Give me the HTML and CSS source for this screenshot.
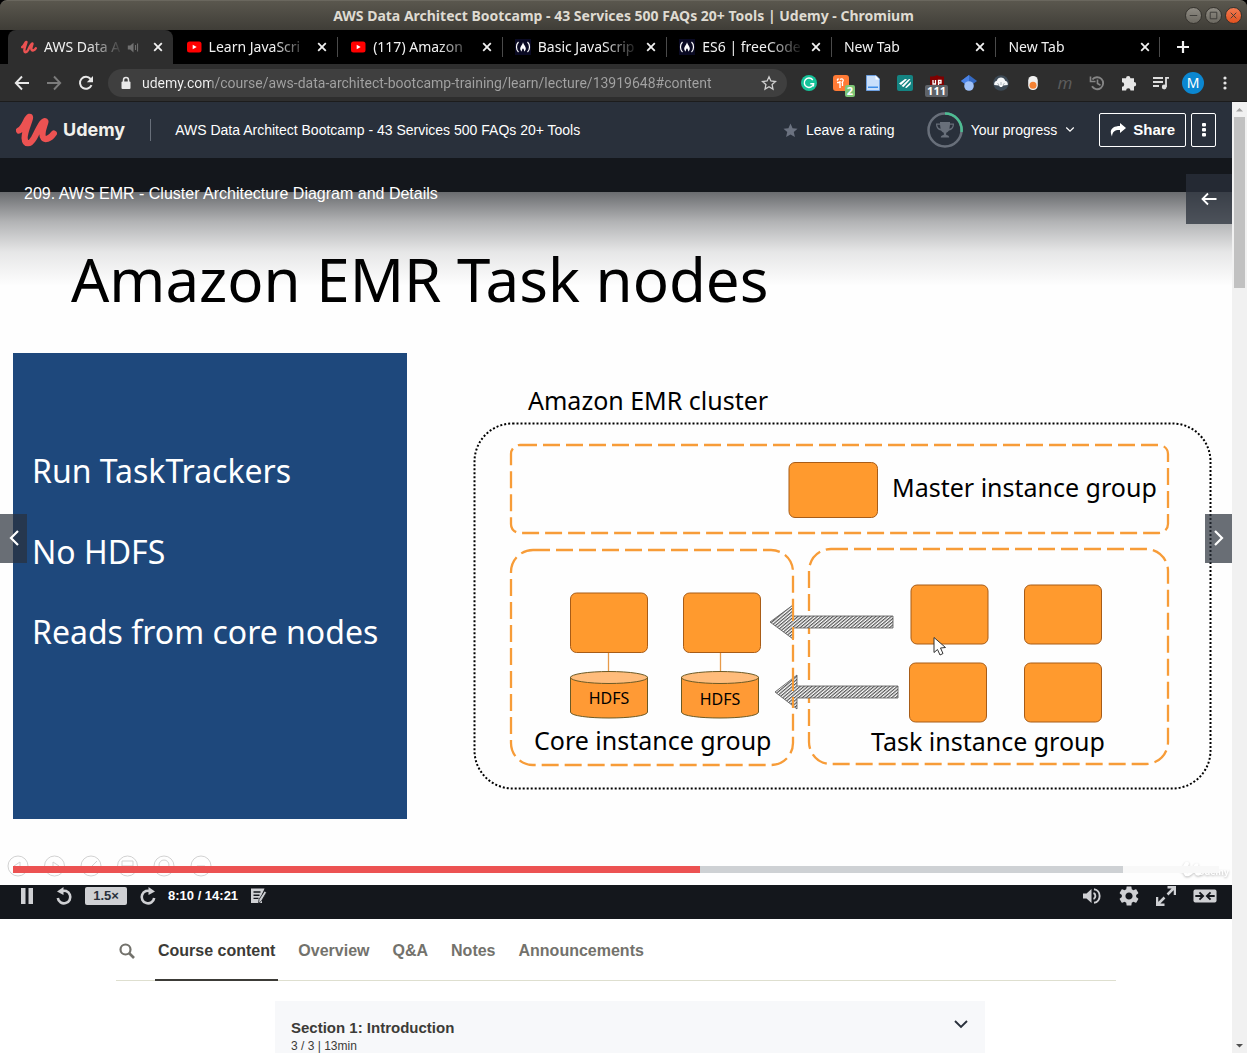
FILE: index.html
```html
<!DOCTYPE html>
<html lang="en">
<head>
<meta charset="utf-8">
<meta name="viewport" content="width=device-width, initial-scale=1">
<title>AWS Data Architect Bootcamp - 43 Services 500 FAQs 20+ Tools | Udemy</title>
<link rel="stylesheet" href="styles.css">
</head>
<body>
<svg class="sprite" aria-hidden="true">
  <symbol id="i-close" viewBox="0 0 16 16"><path d="M4.200 4.200l7.600 7.600M11.800 4.200l-7.600 7.600" stroke="currentColor" stroke-width="1.800" fill="none"/></symbol>
  <symbol id="i-u" viewBox="0 0 41 34"><path d="M3 17.500C9 14.500 10 5 13.500 3.800C16 3.500 8.500 17 8.600 25C9 32 14 32 18 25C22 17.500 25.500 8.500 29 8C31 8 25 17.500 26.800 23.500C28.500 28 34 26 37.800 20.500" fill="none" stroke="currentColor" stroke-width="6.200" stroke-linecap="round" stroke-linejoin="round"/></symbol>
  <symbol id="i-yt" viewBox="0 0 16 16"><rect x="1" y="2.500" width="14.500" height="11" rx="2.500" fill="#f00"/><path d="M6.700 5.700v4.600l4-2.300z" fill="#fff"/></symbol>
  <symbol id="i-fcc" viewBox="0 0 16 16"><rect width="16" height="16" fill="#0a0a23"/><path d="M3.500 3C.8 5.500.8 10.500 3.500 13M12.500 3c2.700 2.500 2.700 7.500 0 10" fill="none" stroke="#fff" stroke-width="1.200"/><path d="M8 3.200c.6 2.600 2.800 3.800 2.800 6.300 0 1.300-.6 2.300-1.700 3 .3-1.600-.4-2.400-1.100-3.300-.8.9-1.400 1.800-1.100 3.300-1.100-.7-1.700-1.700-1.700-3C5.200 7 7.600 6 8 3.200z" fill="#fff"/></symbol>
  <symbol id="i-down" viewBox="0 0 16 16"><path d="M2 4l6 6 6-6" fill="none" stroke="currentColor" stroke-width="1.900"/></symbol>
</svg>

<header class="titlebar">
  <h1 class="titlebar-text">AWS Data Architect Bootcamp - 43 Services 500 FAQs 20+ Tools | Udemy - Chromium</h1>
  <div class="window-buttons">
    <button class="window-button" aria-label="Minimize"><svg viewBox="0 0 16 16"><path d="M4 8h8"/></svg></button>
    <button class="window-button" aria-label="Maximize"><svg viewBox="0 0 16 16"><path d="M4.500 4.500h7v7h-7z"/></svg></button>
    <button class="window-button window-close" aria-label="Close window"><svg viewBox="0 0 16 16"><path d="M5 5l6 6M11 5l-6 6"/></svg></button>
  </div>
</header>

<nav class="tabstrip" aria-label="Browser tabs">
  <div class="tab tab-active">
    <svg class="favicon favicon-udemy"><use href="#i-u"/></svg><span class="tab-title">AWS Data A</span>
    <svg class="tab-sound" viewBox="0 0 16 16"><path d="M1 5.500h3l4-3.500v12L4 10.500H1z" fill="currentColor"/><path d="M10.500 5v6M13 3v10" stroke="currentColor" stroke-width="1.300"/></svg>
    <button class="tab-close" aria-label="Close tab"><svg><use href="#i-close"/></svg></button>
  </div>
  <div class="tab"><svg class="favicon"><use href="#i-yt"/></svg><span class="tab-title">Learn JavaScri</span><button class="tab-close" aria-label="Close tab"><svg><use href="#i-close"/></svg></button></div>
  <div class="tab"><svg class="favicon"><use href="#i-yt"/></svg><span class="tab-title">(117) Amazon</span><button class="tab-close" aria-label="Close tab"><svg><use href="#i-close"/></svg></button></div>
  <div class="tab"><svg class="favicon"><use href="#i-fcc"/></svg><span class="tab-title">Basic JavaScrip</span><button class="tab-close" aria-label="Close tab"><svg><use href="#i-close"/></svg></button></div>
  <div class="tab"><svg class="favicon"><use href="#i-fcc"/></svg><span class="tab-title">ES6 | freeCode</span><button class="tab-close" aria-label="Close tab"><svg><use href="#i-close"/></svg></button></div>
  <div class="tab"><span class="tab-title">New Tab</span><button class="tab-close" aria-label="Close tab"><svg><use href="#i-close"/></svg></button></div>
  <div class="tab"><span class="tab-title">New Tab</span><button class="tab-close" aria-label="Close tab"><svg><use href="#i-close"/></svg></button></div>
  <button class="new-tab" aria-label="New tab"><svg viewBox="0 0 16 16"><path d="M8 2v12M2 8h12" stroke="currentColor" stroke-width="2.200"/></svg></button>
</nav>

<div class="toolbar">
  <button class="tool" aria-label="Back"><svg viewBox="0 0 16 16"><path d="M15 8H2M8 1.500L1.800 8 8 14.500" fill="none" stroke="#e8e8e8" stroke-width="1.900"/></svg></button>
  <button class="tool" aria-label="Forward"><svg viewBox="0 0 16 16"><path d="M1 8h13M8 1.500L14.200 8 8 14.500" fill="none" stroke="#7c7c7c" stroke-width="1.900"/></svg></button>
  <button class="tool" aria-label="Reload"><svg viewBox="0 0 16 16"><path d="M13.500 10.200A6 6 0 1 1 12.600 4" fill="none" stroke="#e8e8e8" stroke-width="2"/><path d="M15 1v6.200H8.800z" fill="#e8e8e8"/></svg></button>
  <div class="omnibox">
    <svg class="lock" viewBox="0 0 12 14"><rect x="1.500" y="5.500" width="9" height="7.500" rx="1" fill="#e8e8e8"/><path d="M3.500 6V4a2.500 2.500 0 0 1 5 0v2" fill="none" stroke="#e8e8e8" stroke-width="1.500"/></svg>
    <input class="address" type="text" aria-label="Address" value="udemy.com/course/aws-data-architect-bootcamp-training/learn/lecture/13919648#content">
    <button class="bookmark" aria-label="Bookmark this page"><svg viewBox="0 0 16 16"><path d="M8 1.800l1.900 4.200 4.600.5-3.400 3.100.9 4.500L8 11.800l-4 2.300.9-4.500L1.500 6.500l4.600-.5z" fill="none" stroke="#d0d0d0" stroke-width="1.300"/></svg></button>
  </div>
  <div class="extensions">
    <button class="tool" aria-label="Grammar"><svg viewBox="0 0 16 16"><circle cx="8" cy="8" r="8" fill="#15c39a"/><path d="M11.800 5A4.700 4.700 0 1 0 12.600 8.700H9.300M12.600 8.500l-.2 3" fill="none" stroke="#fff" stroke-width="1.400"/></svg></button>
    <button class="tool" aria-label="Coupons, 2 found"><svg viewBox="0 0 16 16"><rect width="16" height="16" rx="3" fill="#ff7a35"/><path d="M7 13V6M7 4.500C9.500 2.500 12 5.500 8.500 7.500M9.500 7v4M7 7.500H4M5.500 3.500L4 5.500" fill="none" stroke="#fff" stroke-width="1.300"/></svg><span class="count count-green">2</span></button>
    <button class="tool" aria-label="Page notes"><svg viewBox="0 0 16 16"><path d="M1.500.5h9.500l3.500 3.500v11.500h-13z" fill="#c9dffb" stroke="#6d9fdf"/><path d="M10.500.5v4h4z" fill="#fff"/><path d="M3 11.500h10v1.500H3z" fill="#3f8ee8"/></svg></button>
    <button class="tool" aria-label="Reader"><svg viewBox="0 0 16 16"><rect width="16" height="16" rx="2" fill="#148482"/><path d="M2 8.500l6-4.500 2 .2-6 5.800zM4.500 11L12 4l1.500.2L6.500 12zM8 12.500l6-6-.5 3-4 3.500z" fill="#fff"/></svg></button>
    <button class="tool" aria-label="Blocker, 111 blocked"><svg viewBox="0 0 16 16"><path d="M1 1.500Q6 1.500 8 0q2 1.500 7 1.500V9q0 5-7 7-7-2-7-7z" fill="#800000"/><path d="M4 5v4h2.500V5M9.500 10V5.500H12V8H9.500" fill="none" stroke="#fff" stroke-width="1.300"/></svg><span class="count count-gray">111</span></button>
    <button class="tool" aria-label="Scholar"><svg viewBox="0 0 16 16"><path d="M8 0l8 6-8 6-8-6z" fill="#356ac3"/><path d="M8 0L0 6l8 6z" fill="#4b83e6"/><circle cx="8" cy="11" r="4.800" fill="#9fc1f8"/></svg></button>
    <button class="tool" aria-label="Proxy"><svg viewBox="0 0 16 16"><circle cx="8" cy="8" r="7.800" fill="#3d4a56"/><path d="M1.200 10c-.3-2.200 1-4 2.600-4.200C4.500 3.600 6 2.500 8 2.500s3.500 1.100 4.200 3.300c1.600.2 2.900 2 2.600 4.200L10 10.500 9 12H7L6 10.500z" fill="#f4f6f8"/><path d="M8 10V7M6 10L4.500 8M10 10l1.500-2" stroke="#9aa4ab" stroke-width=".8"/></svg></button>
    <button class="tool" aria-label="Switch"><svg viewBox="0 0 16 16"><rect x="3.200" y="1" width="9.600" height="14" rx="4.500" fill="#f0f0f0"/><circle cx="8" cy="10.200" r="3.500" fill="#f58233"/></svg></button>
    <button class="tool tool-m" aria-label="Mercury"><i>m</i></button>
    <button class="tool" aria-label="History"><svg viewBox="0 0 16 16"><path d="M3.400 4.500A6 6 0 1 1 3 11.300" fill="none" stroke="#858585" stroke-width="1.900"/><path d="M1.500 1.500v5h5M8.500 4.500v4l3 1.700" fill="none" stroke="#858585" stroke-width="1.600"/></svg></button>
    <button class="tool" aria-label="Extensions"><svg viewBox="0 0 16 16"><path d="M1 3.300H5a2.200 2.200 0 1 1 4.400 0H13V7a2.200 2.200 0 1 1 0 4.400v4.100H9.500a2.200 2.200 0 0 0-4.400 0H1v-3.800a2.200 2.200 0 0 0 0-4.400z" fill="#e6e6e6"/></svg></button>
    <button class="tool" aria-label="Media"><svg viewBox="0 0 16 16"><path d="M0 3h10M0 7h10M0 11h6M13 12V2.800h3" fill="none" stroke="#dedede" stroke-width="1.800"/><circle cx="11.200" cy="12" r="2.400" fill="#dedede"/></svg></button>
    <button class="tool" aria-label="Profile"><span class="avatar">M</span></button>
    <button class="tool" aria-label="Browser menu"><svg viewBox="0 0 16 16" fill="#e6e6e6"><circle cx="8" cy="3" r="1.600"/><circle cx="8" cy="8" r="1.600"/><circle cx="8" cy="13" r="1.600"/></svg></button>
  </div>
</div>

<div class="viewport">
  <main class="page">
    <header class="course-header">
      <a class="brand" href="#home"><svg class="brand-mark"><use href="#i-u"/></svg><span class="brand-name">Udemy</span></a>
      <a class="course-title" href="#course">AWS Data Architect Bootcamp - 43 Services 500 FAQs 20+ Tools</a>
      <button class="rating"><svg viewBox="0 0 16 16"><path d="M8 .5l2.200 5 5.300.5-4 3.600 1.200 5.400L8 12.300 3.300 15l1.200-5.400-4-3.600 5.300-.5z" fill="#6b7280"/></svg>Leave a rating</button>
      <button class="progress">
        <svg class="ring" viewBox="0 0 36 36"><circle cx="18" cy="18" r="16.500" fill="none" stroke="#686f7a" stroke-width="2.500"/><path d="M18 1.500A16.500 16.500 0 0 1 34.500 20" fill="none" stroke="#4dbd93" stroke-width="2.500"/><path d="M13 10h10v1.500h4c0 4-1.500 6.500-5 7-.8 1.300-2 2-2.800 2.300v2.200c1.800.2 3 1 3 2.500h-8.400c0-1.500 1.200-2.300 3-2.500v-2.200c-.8-.3-2-1-2.800-2.300-3.500-.5-5-3-5-7h4z" fill="#686f7a"/><path d="M10.200 12.800h2.800l.6 4c-2-.4-3.100-1.800-3.400-4zM25.800 12.800H23l-.6 4c2-.4 3.100-1.800 3.400-4z" fill="#29303b"/></svg>
        <span>Your progress</span><svg class="chevron"><use href="#i-down"/></svg>
      </button>
      <div class="header-buttons">
        <button class="outline share"><svg viewBox="0 0 16 14"><path d="M10 0l6 5-6 5V7C5 6.800 2.500 8.500 2 13.500-1.500 6.500 3 3 10 3z" fill="currentColor"/></svg>Share</button>
        <button class="outline more" aria-label="More options"><svg viewBox="0 0 4 14" fill="currentColor"><rect width="4" height="3.500" rx="1"/><rect y="5" width="4" height="3.500" rx="1"/><rect y="10" width="4" height="3.500" rx="1"/></svg></button>
      </div>
    </header>

    <section class="player" aria-label="Video player">
      <svg class="slide" viewBox="0 0 1232 693" role="img" aria-label="Amazon EMR Task nodes">
        <defs>
          <pattern id="hatch" width="2.500" height="2.500" patternUnits="userSpaceOnUse" patternTransform="rotate(50)"><rect width="2.500" height="2.500" fill="#fff"/><rect width="1.200" height="2.500" fill="#555"/></pattern>
        </defs>
        <rect width="1232" height="693" fill="#fefefe"/>
        <text class="slide-title" x="71" y="110">Amazon EMR Task nodes</text>
        <rect x="13" y="161" width="394" height="466" fill="#1e487c"/>
        <g class="slide-points"><text x="32" y="291">Run TaskTrackers</text><text x="32" y="372">No HDFS</text><text x="32" y="452">Reads from core nodes</text></g>
        <rect x="474.500" y="231.500" width="736" height="365" rx="38" fill="none" stroke="#000" stroke-width="2" stroke-dasharray="2 2"/>
        <g fill="none" stroke="#f79c38" stroke-width="2.300" stroke-dasharray="17 6">
          <rect x="511" y="253" width="657" height="88" rx="9"/>
          <rect x="511" y="358" width="282" height="215" rx="22"/>
          <rect x="809" y="357" width="359" height="215" rx="22"/>
        </g>
        <g fill="url(#hatch)" stroke="#555" stroke-width=".8">
          <path d="M770 430l23-17v11h100v12H793v11z"/>
          <path d="M775 500l22-17v11h101v12H797v11z"/>
        </g>
        <path d="M793 412v36M793 482v34" stroke="#f79c38" stroke-width="2" stroke-dasharray="17 6"/>
        <path d="M608.500 460v20M720.500 460v20" stroke="#e79a49" stroke-width="1.300"/>
        <g fill="#ff9a2e" stroke="#a85c17">
          <rect x="789" y="270.500" width="88.500" height="55" rx="6"/>
          <rect x="570.500" y="401" width="77" height="59.500" rx="6"/>
          <rect x="683.500" y="401" width="77" height="59.500" rx="6"/>
          <rect x="911" y="393" width="77" height="59" rx="6"/>
          <rect x="1024.500" y="393" width="77" height="59" rx="6"/>
          <rect x="909.500" y="471" width="77" height="59" rx="6"/>
          <rect x="1024.500" y="471" width="77" height="59" rx="6"/>
        </g>
        <g fill="#ff9a35" stroke="#6b5a26">
          <path d="M570.500 485v35c0 8 77 8 77 0v-35z"/><path d="M681.500 485v35c0 8 77 8 77 0v-35z"/>
          <ellipse cx="609" cy="485.500" rx="38.500" ry="6" fill="#ffbc7b"/><ellipse cx="720" cy="485.500" rx="38.500" ry="6" fill="#ffbc7b"/>
        </g>
        <g class="slide-labels"><text x="528" y="218">Amazon EMR cluster</text><text x="892" y="305">Master instance group</text><text x="534" y="558">Core instance group</text><text x="871" y="559">Task instance group</text></g>
        <g class="slide-hdfs"><text x="609" y="512">HDFS</text><text x="720" y="513">HDFS</text></g>
        <path d="M934 445.500v15l3.500-3 2.500 5.500 3-1.500-2.500-5.500 5-.5z" fill="#fff" stroke="#333" stroke-width="1"/>
        <g fill="none" stroke="#d2d2d2">
          <circle cx="18" cy="674" r="10"/><circle cx="54.500" cy="674" r="10"/><circle cx="91" cy="674" r="10"/><circle cx="127.500" cy="674" r="10"/><circle cx="164" cy="674" r="10"/><circle cx="201" cy="674" r="10"/>
          <path d="M20 670l-6 4 6 4zM53 670l6 4-6 4zM88 678l9-9M122 669h11v5h-11zM123 677h9M197 674h8"/><circle cx="164" cy="673" r="5"/>
        </g>
        <g class="watermark"><path d="M1181 679c4-3 4-8 6-8s-3 7-2 10 6 2 8-3 4-6 4-5-2 8 0 9 3-1 4-3" fill="none" stroke="#fff" stroke-width="3"/><text x="1198" y="683">Udemy</text></g>
      </svg>
      <h2 class="lecture-title">209. AWS EMR - Cluster Architecture Diagram and Details</h2>
      <button class="expand" aria-label="Open course content"><svg viewBox="0 0 16 14"><path d="M15.500 7H2M7 1.500L1.500 7 7 12.500" fill="none" stroke="#fff" stroke-width="1.800"/></svg></button>
      <button class="step step-prev" aria-label="Previous lecture"><svg viewBox="0 0 10 16"><path d="M9 1L2 8l7 7" fill="none" stroke="#fff" stroke-width="2.200"/></svg></button>
      <button class="step step-next" aria-label="Next lecture"><svg viewBox="0 0 10 16"><path d="M1 1l7 7-7 7" fill="none" stroke="#fff" stroke-width="2.200"/></svg></button>
      <div class="player-bar">
        <input class="seek" type="range" min="0" max="861" value="490" aria-label="Seek" style="--played:57%;--loaded:92%">
        <div class="controls">
          <button class="control" aria-label="Pause"><svg viewBox="0 0 20 20"><path d="M4 2h4.500v16H4zM11.500 2H16v16h-4.500z" fill="currentColor"/></svg></button>
          <button class="control" aria-label="Rewind"><svg viewBox="0 0 20 20"><path d="M7 5.500A6.300 6.300 0 1 1 3.800 12" fill="none" stroke="currentColor" stroke-width="2.600"/><path d="M9.500 1v8L3 5.500z" fill="currentColor"/></svg></button>
          <button class="speed">1.5×</button>
          <button class="control" aria-label="Forward"><svg viewBox="0 0 20 20"><path d="M13 5.500A6.300 6.300 0 1 0 16.200 12" fill="none" stroke="currentColor" stroke-width="2.600"/><path d="M10.500 1v8L17 5.500z" fill="currentColor"/></svg></button>
          <span class="time">8:10 / 14:21</span>
          <button class="control" aria-label="Add note"><svg viewBox="0 0 20 20"><path d="M3 2.500h13.500l-1 2.500-1.500 3v9H3z" fill="currentColor"/><path d="M5.500 6h7M5.500 9.200h6M5.500 12.400h5" stroke="#14171c" stroke-width="1.400"/><path d="M16.500 5l2 1.500-5 8.500-3 2.500.5-4z" fill="currentColor" stroke="#14171c" stroke-width=".8"/></svg></button>
          <div class="controls-right">
            <button class="control" aria-label="Volume"><svg viewBox="0 0 20 20"><path d="M1 7.500h3.500l5-4.500v14l-5-4.500H1z" fill="currentColor"/><path d="M11.500 7c2.500 1 2.500 5 0 6M12 3.200c7.500 1 7.500 12.600 0 13.600" fill="none" stroke="currentColor" stroke-width="1.900"/></svg></button>
            <button class="control" aria-label="Settings"><svg viewBox="2 2 20 20"><path fill="currentColor" d="M19.140 12.940c.04-.3.06-.61.06-.94 0-.32-.02-.64-.07-.94l2.030-1.580c.18-.14.23-.41.12-.61l-1.920-3.320c-.12-.22-.37-.29-.59-.22l-2.390.96c-.5-.38-1.030-.7-1.620-.94l-.36-2.540c-.04-.24-.24-.41-.48-.41h-3.840c-.24 0-.43.17-.47.41l-.36 2.540c-.59.24-1.130.57-1.620.94l-2.390-.96c-.22-.08-.47 0-.59.22L2.740 8.870c-.12.21-.08.47.12.61l2.030 1.580c-.05.3-.09.63-.09.94s.02.64.07.94l-2.030 1.580c-.18.14-.23.41-.12.61l1.920 3.320c.12.22.37.29.59.22l2.390-.96c.5.38 1.030.7 1.620.94l.36 2.540c.05.24.24.41.48.41h3.840c.24 0 .44-.17.47-.41l.36-2.540c.59-.24 1.130-.56 1.620-.94l2.390.96c.22.08.47 0 .59-.22l1.920-3.320c.12-.22.07-.47-.12-.61l-2.010-1.580zM12 15.600c-1.980 0-3.600-1.620-3.600-3.600s1.620-3.600 3.600-3.600 3.600 1.620 3.600 3.600-1.620 3.600-3.600 3.600z"/></svg></button>
            <button class="control" aria-label="Full screen"><svg viewBox="0 0 20 20"><path d="M11.500 8.500L18 2M11.500 1.200H19V9M8.500 11.500L2 18M8.500 18.800H1V11" fill="none" stroke="currentColor" stroke-width="2.500"/></svg></button>
            <button class="control control-wide" aria-label="Theatre mode"><svg viewBox="0 0 26 20"><rect x=".5" y="3" width="25" height="14" rx="2" fill="currentColor"/><path d="M2.500 10H10M7 6l4 4-4 4M23.500 10H16M19 6l-4 4 4 4" fill="none" stroke="#14171c" stroke-width="2"/></svg></button>
          </div>
        </div>
      </div>
    </section>

    <nav class="course-nav" aria-label="Course sections">
      <button class="search" aria-label="Search course content"><svg viewBox="0 0 16 16"><circle cx="6.500" cy="6.500" r="5" fill="none" stroke="currentColor" stroke-width="2.200"/><path d="M10 10l5 5" stroke="currentColor" stroke-width="2.600"/></svg></button>
      <a class="nav-link nav-current" href="#content">Course content</a>
      <a class="nav-link" href="#overview">Overview</a>
      <a class="nav-link" href="#qa">Q&amp;A</a>
      <a class="nav-link" href="#notes">Notes</a>
      <a class="nav-link" href="#announcements">Announcements</a>
    </nav>

    <div class="curriculum">
      <section class="section-card">
        <div class="section-text"><h3>Section 1: Introduction</h3><p>3 / 3 | 13min</p></div>
        <button class="section-toggle" aria-label="Expand section"><svg><use href="#i-down"/></svg></button>
      </section>
    </div>
  </main>
  <div class="scrollbar" aria-hidden="true">
    <svg class="scroll-arrow" viewBox="0 0 15 15"><path d="M4 9.500L7.500 6 11 9.500z" fill="#a3a3a3"/></svg>
    <div class="scroll-thumb"></div>
    <svg class="scroll-arrow" viewBox="0 0 15 15"><path d="M4 6l3.500 3.500L11 6z" fill="#505050"/></svg>
  </div>
</div>
</body>
</html>
```
FILE: styles.css
```css
* { box-sizing: border-box; }
html, body { height: 100%; }
body {
  margin: 0;
  display: flex;
  flex-direction: column;
  overflow: hidden;
  background: #000;
  color: #3c3b37;
  font: 14px/20px "Noto Sans", sans-serif;
}
h1, h2, h3, p { margin: 0; font: inherit; }
button { margin: 0; padding: 0; border: 0; background: none; color: inherit; font: inherit; cursor: pointer; }
a { color: inherit; text-decoration: none; }
svg { display: block; flex: none; }
.sprite { position: absolute; width: 0; height: 0; }

/* Window frame */
.titlebar {
  flex: none;
  height: 30px;
  padding: 0 4px;
  display: grid;
  grid-template-columns: 60px 1fr 60px;
  align-items: center;
  border-radius: 7px 7px 0 0;
  border-top: 1px solid #6a675e;
  background: linear-gradient(#5a574e, #3f3d37);
}
.titlebar-text { grid-column: 2; text-align: center; font-weight: 700; color: #dfdbd2; white-space: nowrap; overflow: hidden; }
.window-buttons { display: flex; }
.window-button { width: 20px; display: grid; place-items: center; }
.window-button svg {
  width: 17px; height: 17px;
  border-radius: 50%;
  border: 1px solid #35332e;
  background: linear-gradient(#8e8b83, #6c6961);
  fill: none; stroke: #3c3b37;
}
.window-close svg { background: linear-gradient(#f37a51, #e2521f); }

.tabstrip { flex: none; height: 34px; padding-left: 8px; display: flex; background: #000; color: #f1f1f1; }
.tab { position: relative; flex: 1 1 0; min-width: 0; display: flex; align-items: center; padding: 0 7px 0 13px; }
.tab + .tab + .tab::before, .tab:nth-last-child(2)::after {
  content: ""; position: absolute; left: 0; top: 7px; width: 1px; height: 20px; background: #4a4a4a;
}
.tab:nth-last-child(2)::after { left: auto; right: 0; }
.tab-active { background: #2e2e2e; border-radius: 8px 8px 0 0; }
.favicon { width: 16px; height: 16px; margin-right: 7px; }
.favicon-udemy { color: #ec5252; }
.tab-title {
  flex: 1; min-width: 0; white-space: nowrap;
  -webkit-mask-image: linear-gradient(90deg, #000 calc(100% - 36px), transparent);
  mask-image: linear-gradient(90deg, #000 calc(100% - 36px), transparent);
}
.tab-sound { width: 13px; height: 13px; margin: 0 6px 0 4px; color: #707070; }
.tab-close { margin-left: 4px; }
.tab-close svg { width: 16px; height: 16px; }
.new-tab { width: 87px; padding-left: 15px; }
.new-tab svg { width: 16px; height: 16px; }

.toolbar { flex: none; height: 38px; padding: 0 6px; display: flex; align-items: center; background: #2e2e2e; border-bottom: 1px solid #1c1c1c; }
.tool { position: relative; width: 32px; height: 32px; display: grid; place-items: center; }
.tool svg { width: 16px; height: 16px; }
.omnibox { flex: 1; min-width: 0; height: 28px; margin: 0 6px; padding: 0 10px 0 12px; border-radius: 14px; display: flex; align-items: center; gap: 10px; background: #3f3f3f; }
.lock { width: 12px; height: 14px; }
.address {
  flex: 1; min-width: 0; padding: 0; border: 0; outline: 0;
  font: 14px/20px Roboto, sans-serif;
  background: linear-gradient(90deg, #f4f4f4 69px, #a3a3a3 69px);
  -webkit-background-clip: text; background-clip: text;
  color: transparent;
}
.bookmark svg { width: 16px; height: 16px; }
.extensions { display: flex; }
.count { position: absolute; right: 2px; bottom: 2px; padding: 0 2px; border-radius: 2px; font: 700 11px/12px "Noto Sans", sans-serif; color: #fff; }
.count-green { background: #7cc576; }
.count-gray { right: 5px; background: #5f6368; }
.tool-m { font-size: 17px; color: #5c5c5c; }
.avatar { width: 22px; border-radius: 50%; background: #0b87d1; color: #fff; line-height: 22px; }

/* Page and scrollbar */
.viewport { flex: 1; min-height: 0; display: flex; background: #fff; font-family: "Liberation Sans", Arial, sans-serif; }
.page { flex: 1; min-width: 0; overflow: hidden; }
.scrollbar { flex: none; width: 15px; display: flex; flex-direction: column; background: #f1f1f1; }
.scroll-arrow { width: 15px; height: 15px; }
.scroll-thumb { width: 11px; height: 171px; margin: 0 2px auto; background: #c1c1c1; }

.course-header { height: 56px; padding: 0 16px; display: flex; align-items: center; background: #29303b; color: #fff; font-size: 14px; }
.brand { display: flex; align-items: center; gap: 6px; }
.brand-mark { width: 41px; height: 34px; color: #ec5252; }
.brand-name { font: 700 18px/24px Inter, sans-serif; color: #f2f1ec; }
.course-title { margin-left: 25px; padding-left: 24px; border-left: 1px solid #686f7a; line-height: 22px; white-space: nowrap; }
.rating { margin-left: auto; display: flex; align-items: center; gap: 8px; white-space: nowrap; }
.rating svg { width: 15px; height: 15px; }
.progress { margin-left: 32px; display: flex; align-items: center; gap: 8px; white-space: nowrap; }
.ring { width: 36px; height: 36px; }
.chevron { width: 10px; height: 10px; }
.header-buttons { margin-left: 24px; display: flex; gap: 5px; }
.outline { height: 34px; border: 1px solid #fff; border-radius: 2px; display: flex; align-items: center; justify-content: center; }
.share { padding: 0 10px; gap: 7px; font-size: 15px; font-weight: 700; }
.share svg { width: 16px; height: 14px; }
.more { width: 25px; }
.more svg { width: 4px; height: 14px; }

/* Player */
.player { position: relative; padding: 34px 0; background: #14171c; }
.player::before {
  content: ""; position: absolute; inset: 0 0 auto; height: 128px;
  background: linear-gradient(rgba(20, 23, 28, .9), rgba(20, 23, 28, .63) 34px, rgba(20, 23, 28, .32) 64px, rgba(20, 23, 28, .1) 94px, transparent);
}
.slide { width: 100%; height: auto; font-family: "Noto Sans", sans-serif; }
.slide-title { font-size: 60px; }
.slide-points { font-size: 32px; fill: #fff; }
.slide-labels { font-size: 25px; }
.slide-hdfs { font-size: 16px; text-anchor: middle; }
.watermark { filter: drop-shadow(0 1px 1px #bbb); font: 700 9px Inter, sans-serif; fill: #fff; }
.lecture-title { position: absolute; left: 24px; top: 24px; color: #fff; font-size: 16px; line-height: 24px; }
.expand { position: absolute; right: 0; top: 16px; width: 46px; height: 50px; display: grid; place-items: center; background: rgba(41, 48, 59, .75); }
.expand svg { width: 16px; height: 14px; }
.step { position: absolute; top: 50%; width: 27px; height: 49px; margin-top: -25px; display: grid; place-items: center; background: rgba(41, 48, 59, .7); }
.step svg { width: 10px; height: 16px; }
.step-prev { left: 0; }
.step-next { right: 0; }
.player-bar { position: absolute; inset: auto 0 0; padding: 0 13px 12px; }
.seek { -webkit-appearance: none; appearance: none; display: block; width: 100%; height: 7px; margin: 0 0 11px; background: linear-gradient(90deg, #ec5252 var(--played), #ced1d4 var(--played) var(--loaded), #f8f8f8 var(--loaded)); }
.seek::-webkit-slider-thumb { -webkit-appearance: none; width: 0; height: 0; }
.controls { display: flex; align-items: center; gap: 17px; height: 23px; padding: 0 2px 0 4px; color: #cfd0d3; }
.control svg { width: 20px; height: 20px; }
.control-wide svg { width: 24px; }
.speed { width: 42px; margin: 0 -6px; border-radius: 2px; background: #cfd0d3; color: #29303b; font-size: 13px; font-weight: 700; line-height: 18px; }
.time { margin: 0 -7px; color: #fff; font-size: 13px; font-weight: 700; white-space: nowrap; }
.controls-right { margin-left: auto; display: flex; gap: 17px; }

/* Course navigation and curriculum */
.course-nav { max-width: 1000px; height: 62px; margin: 0 auto; display: flex; gap: 17px; border-bottom: 1px solid #dedfcf; color: #73726c; font-size: 16px; font-weight: 700; }
.search { padding: 3px 3px 0; }
.search svg { width: 16px; height: 16px; }
.nav-link { height: 62px; padding: 0 3px; line-height: 64px; white-space: nowrap; }
.nav-current { color: #3c3b37; border-bottom: 2px solid #3c3b37; }
.curriculum { max-width: 738px; margin: 20px auto 0; padding-left: 28px; }
.section-card { padding: 16px; display: flex; justify-content: space-between; align-items: flex-start; background: #f7f8fa; }
.section-text h3 { font-size: 15px; font-weight: 700; line-height: 22px; }
.section-text p { font-size: 12px; line-height: 14px; }
.section-toggle { color: #29303b; }
.section-toggle svg { width: 16px; height: 16px; }
```
